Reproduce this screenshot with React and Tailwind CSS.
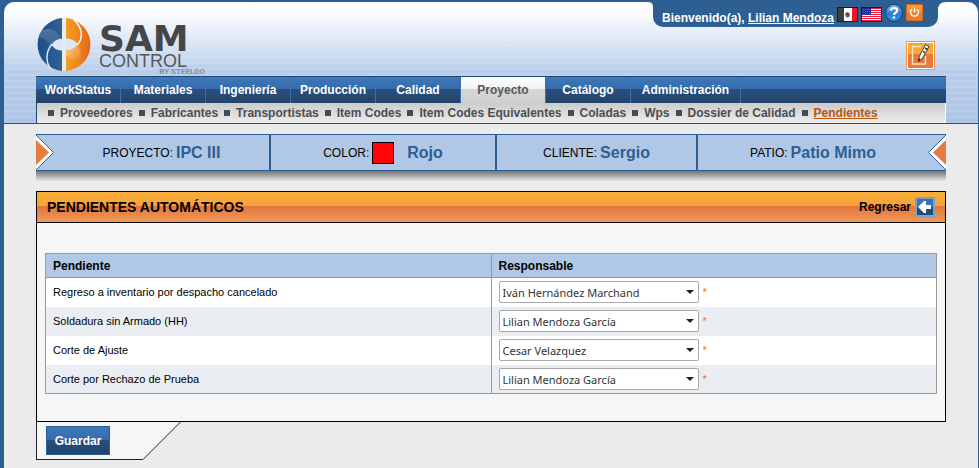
import React from "react";

const navItems = ["WorkStatus", "Materiales", "Ingeniería", "Producción", "Calidad", "Proyecto", "Catálogo", "Administración"];

const subItems = [
  "Proveedores",
  "Fabricantes",
  "Transportistas",
  "Item Codes",
  "Item Codes Equivalentes",
  "Coladas",
  "Wps",
  "Dossier de Calidad",
  "Pendientes",
];

const people = ["Iván Hernández Marchand", "Lilian Mendoza García", "Cesar Velazquez"];

const rows = [
  { id: "regreso", task: "Regreso a inventario por despacho cancelado", person: people[0] },
  { id: "soldadura", task: "Soldadura sin Armado (HH)", person: people[1] },
  { id: "ajuste", task: "Corte de Ajuste", person: people[2] },
  { id: "rechazo", task: "Corte por Rechazo de Prueba", person: people[1] },
];

function LogoMark() {
  return (
    <svg viewBox="0 0 54 54" className="h-[54px] w-[54px] shrink-0" aria-hidden="true">
      <defs>
        <linearGradient id="lgBlue" x1="0" y1="0" x2="1" y2="0">
          <stop offset="0" stopColor="#1f4f86" />
          <stop offset="1" stopColor="#2f6299" />
        </linearGradient>
        <linearGradient id="lgOrange" x1="0" y1="0" x2="1" y2="0">
          <stop offset="0" stopColor="#f6a01c" />
          <stop offset="0.4" stopColor="#f08a1e" />
          <stop offset="1" stopColor="#e2641b" />
        </linearGradient>
        <linearGradient id="lgSheen" x1="0" y1="0" x2="1" y2="1">
          <stop offset="0" stopColor="#ffffff" stopOpacity="0.2" />
          <stop offset="1" stopColor="#ffffff" stopOpacity="0.05" />
        </linearGradient>
        <linearGradient id="lgGlow" x1="0" y1="0" x2="1" y2="1">
          <stop offset="0" stopColor="#ffffff" stopOpacity="0.45" />
          <stop offset="1" stopColor="#ffffff" stopOpacity="0.05" />
        </linearGradient>
      </defs>
      <path d="M25 0.080A26.500 26.500 0 0 0 25 52.920Z" fill="url(#lgBlue)" />
      <path d="M29 0.080A26.500 26.500 0 0 1 29 52.920Z" fill="url(#lgOrange)" />
      <path d="M5 12Q18 8 23 20Q17 23 15 28Q9 21 2 19Q3 15 5 12Z" fill="url(#lgSheen)" />
      <path d="M29 32.500Q37 31 40 26Q44 30 44 40Q34 44 29 37Z" fill="url(#lgGlow)" />
      <path d="M14.500 27Q18 20 27 20.500Q37 20 40.500 26Q37 32.500 27 32.500Q18 33 14.500 27Z" fill="#dde7f4" />
      <path d="M25 0h4v53h-4z" fill="#e6edf7" />
      <path d="M15 26C9 33 8 44 14 51" fill="none" stroke="#e6edf7" strokeWidth="1.400" />
      <path d="M40 27C47 20 45 9 37 2" fill="none" stroke="#ffffff" strokeWidth="1.400" />
    </svg>
  );
}

function MexicoFlag() {
  return (
    <svg viewBox="0 0 21 15" className="h-[15px] w-[21px]" aria-hidden="true">
      <rect width="21" height="15" fill="#1c1c1c" />
      <rect x="1" y="1" width="6" height="13" fill="#3b3f3e" />
      <rect x="7" y="1" width="8" height="13" fill="#fff" />
      <rect x="15" y="1" width="5" height="13" fill="#f5102a" />
      <path d="M8.500 6l2-1 2 1 .500 3-1.500 1.500H9.500L8 8z" fill="#6b6f5c" />
      <path d="M9 6.500l3 1.500" stroke="#2b2b20" />
    </svg>
  );
}

function UsFlag() {
  return (
    <svg viewBox="0 0 21 15" className="h-[15px] w-[21px]" aria-hidden="true">
      <rect width="21" height="15" fill="#1c1c1c" />
      <rect x="1" y="1" width="19" height="13" fill="#fff" />
      <path d="M1 1.500h19M1 3.500h19M1 5.500h19M1 7.500h19M1 9.500h19M1 11.500h19M1 13.500h19" stroke="#ee1c38" />
      <rect x="1" y="1" width="9" height="7" fill="#1c2f8c" />
      <path d="M2 2.500h7M2 4.500h7M2 6.500h7" stroke="#5b69ad" strokeDasharray="1 1" />
    </svg>
  );
}

function HelpIcon() {
  return (
    <svg viewBox="0 0 18 18" className="h-[18px] w-[18px]" aria-hidden="true">
      <defs>
        <linearGradient id="help" x1="0" y1="0" x2="0" y2="1">
          <stop offset="0" stopColor="#8fbcec" />
          <stop offset="0.5" stopColor="#2f7bd0" />
          <stop offset="1" stopColor="#2f8fe6" />
        </linearGradient>
      </defs>
      <circle cx="9" cy="9" r="8.500" fill="url(#help)" stroke="#14406f" />
      <path d="M5.500 6.500Q6.500 4 9.200 4Q12.200 4.200 12.200 6.600Q12.200 8 10.200 9Q9 9.700 9 11" fill="none" stroke="#fff" strokeWidth="2.200" />
      <circle cx="8.900" cy="13.500" r="1.300" fill="#fff" />
    </svg>
  );
}

function PowerIcon() {
  return (
    <svg viewBox="0 0 17 17" className="h-[17px] w-[17px]" aria-hidden="true">
      <rect width="17" height="17" rx="1" fill="#d2691f" />
      <rect x="1" y="1" width="15" height="15" fill="#f39a3a" />
      <rect x="1" y="8" width="15" height="8" fill="#e87f30" />
      <path d="M5.800 5.200a4 4 0 1 0 5.400 0M8.500 3.500v5" fill="none" stroke="#fff" strokeWidth="1.300" />
    </svg>
  );
}

function EditIcon() {
  return (
    <svg viewBox="0 0 29 29" className="h-[29px] w-[29px]" aria-hidden="true">
      <rect width="29" height="29" fill="#f0953c" />
      <rect x="1" y="1" width="27" height="27" fill="#fff" />
      <rect x="2" y="2" width="25" height="11" fill="#f8a835" />
      <rect x="2" y="13" width="25" height="14" fill="#e5793f" />
      <path d="M15 5.500H6.500v17.500h13V15" fill="none" stroke="#fde3b8" strokeWidth="1.400" />
      <path d="M19.500 3.500l3.500 2-7 12.500-3.500 2.500 .500-4.500z" fill="#fff" stroke="#2f2f2f" strokeWidth="0.900" />
      <path d="M19 7l2.500 1.500M17.500 10l1 2M12.500 20l1.500-2.500" stroke="#2f2f2f" strokeWidth="1.500" />
    </svg>
  );
}

function BackIcon() {
  return (
    <svg viewBox="0 0 20 20" className="h-5 w-5" aria-hidden="true">
      <rect width="20" height="20" fill="#7da0c8" />
      <rect x="2" y="2" width="16" height="8" fill="#3a72b2" />
      <rect x="2" y="10" width="16" height="8" fill="#264a76" />
      <path d="M3 10l6-6h2v4h5v4h-5v4H9z" fill="#fff" />
    </svg>
  );
}

function InfoArrow({ flip }) {
  return (
    <svg viewBox="0 0 18 35" className={flip ? "h-[35px] w-[18px] shrink-0 rotate-180" : "h-[35px] w-[18px] shrink-0"} aria-hidden="true">
      <path d="M-1 -1L17.500 17.500L-1 36Z" fill="#fff" stroke="#2d5f93" />
      <path d="M0 5L13 17.500L0 30Z" fill="#e57b42" />
    </svg>
  );
}

function InfoCell({ label, value, children }) {
  return (
    <div className="flex flex-1 items-center justify-center gap-[3px]">
      <span>{label}:</span>
      {children}
      <strong className="text-[16px] text-[#2d5f93]">{value}</strong>
    </div>
  );
}

export default function App() {
  return (
    <div className="flex min-h-screen flex-col border-t-2 border-r border-l-4 border-[#2d5f93] bg-[#2d5f93] font-['Liberation_Sans',Arial,sans-serif] text-[12px] text-black">
      <header className="rounded-t-[10px] border-b border-[#234e80] bg-[repeating-linear-gradient(to_bottom,rgba(255,255,255,0.1)_0px,rgba(255,255,255,0.1)_2px,transparent_2px,transparent_6px),linear-gradient(to_bottom,#ffffff_0px,#f8fafd_15px,#b8cdea_70px,#adc5e7_121px)]">
        <div className="flex h-[74px] items-start justify-between pl-8">
          <a href="#inicio" aria-label="SAM Control" className="flex gap-2 pt-4 pl-[1px]">
            <LogoMark />
            <span className="flex w-[106px] flex-col text-[#444648]">
              <span className="pt-[6px] font-['DejaVu_Sans',sans-serif] text-[36px] leading-[30px] font-bold">SAM</span>
              <span className="text-[18px] leading-[14px] text-[#55585a]">CONTROL</span>
              <span className="text-right font-['Roboto',sans-serif] text-[8px] leading-[8px] font-bold text-[#8b8f94]">BY STEELGO</span>
            </span>
          </a>
          <div className="mr-10 flex flex-col items-end">
            <div className="relative flex h-[25px] items-start gap-[3px] rounded-b-[10px] bg-[#2d5f93] pr-[15px] pl-[9px] font-bold text-white">
              <svg viewBox="0 0 5 5" className="absolute top-0 -left-[5px] h-[5px] w-[5px]" aria-hidden="true">
                <path d="M0 0H5V5Q5 0 0 0Z" fill="#2d5f93" />
              </svg>
              <svg viewBox="0 0 8 8" className="absolute top-0 -right-2 h-2 w-2" aria-hidden="true">
                <path d="M8 0H0V8Q0 0 8 0Z" fill="#2d5f93" />
              </svg>
              <span className="pt-2 leading-[16px]">
                Bienvenido(a), <a href="#perfil" className="font-bold underline">Lilian Mendoza</a>
              </span>
              <button type="button" aria-label="Español" className="pt-[5px]"><MexicoFlag /></button>
              <button type="button" aria-label="English" className="pt-[5px]"><UsFlag /></button>
              <button type="button" aria-label="Ayuda" className="pt-[2px]"><HelpIcon /></button>
              <button type="button" aria-label="Salir" className="pt-[2px]"><PowerIcon /></button>
            </div>
            <button type="button" aria-label="Editar" className="mt-[14px] mr-[3px]"><EditIcon /></button>
          </div>
        </div>
        <div className="mx-8">
          <nav className="flex h-[27px] border-t border-[#1f4674] bg-[linear-gradient(to_bottom,#3d79bb_0px,#366bab_12px,#2a4f80_12px,#234468_26px)] font-bold text-white">
            {navItems.map((item) => {
              const active = item === "Proyecto";
              const wide = item === "Administración";
              return (
                <a
                  key={item}
                  href={"#" + item.toLowerCase()}
                  className={
                    "flex items-center justify-center border-r border-[#3a70b0] " +
                    (wide ? "w-[110px] " : "w-[85px] ") +
                    (active ? "bg-[linear-gradient(to_bottom,#ffffff_0px,#f2f2f2_12px,#d6d6d6_12px,#cfcfcf_26px)] text-[#55585a]" : "")
                  }
                >
                  {item}
                </a>
              );
            })}
          </nav>
          <nav className="flex h-5 items-center gap-[6px] border-r border-l border-r-white border-l-[#1f4674] bg-gradient-to-b from-[#cbcbcb] to-[#ededed] pl-[11px] font-bold text-[#4a4f52]">
            {subItems.map((item) => (
              <span key={item} className="flex items-center gap-[6px] whitespace-nowrap">
                <span className="h-[6px] w-[6px] bg-[#454c4e]" />
                <a href={"#" + item.toLowerCase().replaceAll(" ", "-")} className={item === "Pendientes" ? "text-[#b9570c] underline" : ""}>
                  {item}
                </a>
              </span>
            ))}
          </nav>
        </div>
      </header>

      <main className="flex-1 bg-[#ebebeb] px-8">
        <section className="mt-[10px]">
          <div className="grid h-[37px] grid-cols-[235fr_226fr_201fr_248fr] border-y border-[#2d5f93] bg-[#b1c7e6]">
            <div className="flex border-r-2 border-[#2d5f93]">
              <InfoArrow />
              <InfoCell label="PROYECTO" value="IPC III" />
            </div>
            <div className="flex border-r-2 border-[#2d5f93]">
              <InfoCell label="COLOR" value="Rojo">
                <span className="mr-[10px] h-[22px] w-[22px] border border-black bg-[#ff0505]" />
              </InfoCell>
            </div>
            <div className="flex border-r-2 border-[#2d5f93]">
              <InfoCell label="CLIENTE" value="Sergio" />
            </div>
            <div className="flex">
              <InfoCell label="PATIO" value="Patio Mimo" />
              <InfoArrow flip />
            </div>
          </div>
          <div className="h-[10px] bg-gradient-to-b from-[#747474] to-[#e6e6e6]" />
        </section>

        <section className="mt-[10px] border border-black bg-[#f6f6f6]">
          <div className="flex h-[31px] items-center justify-between border-b border-black bg-[linear-gradient(to_bottom,#f9ae3b_0px,#f6a338_14px,#e2743b_14px,#ef9a59_30px)] px-[10px]">
            <h1 className="text-[14px] font-bold">PENDIENTES AUTOMÁTICOS</h1>
            <a href="#regresar" className="flex items-center gap-1 font-bold">
              Regresar
              <BackIcon />
            </a>
          </div>
          <div className="px-2 pt-[30px] pb-[27px]">
            <table className="w-full table-fixed border-collapse border border-[#999]">
              <thead>
                <tr className="h-6 border-b border-[#999] bg-[#b1c7e6] text-left">
                  <th className="border-r border-[#999] px-[7px] py-0">Pendiente</th>
                  <th className="px-[7px] py-0">Responsable</th>
                </tr>
              </thead>
              <tbody>
                {rows.map((row) => (
                  <tr key={row.id} className="h-[29px] bg-white even:bg-[#eaeef3]">
                    <td className="border-r border-[#999] px-[7px] py-0 text-[11px]">
                      <label htmlFor={row.id}>{row.task}</label>
                    </td>
                    <td className="px-[7px] py-0">
                      <div className="flex h-[22px] items-center gap-1">
                        <div className="relative">
                          <select
                            id={row.id}
                            defaultValue={row.person}
                            className="block h-[22px] w-[200px] appearance-none rounded-[2px] border border-[#a9a9a9] bg-white pt-[2px] pl-[3px] font-['Noto_Sans','Open_Sans',sans-serif] text-[11px] text-[#333]"
                          >
                            {people.map((p) => (
                              <option key={p}>{p}</option>
                            ))}
                          </select>
                          <svg viewBox="0 0 8 4" className="pointer-events-none absolute top-[9px] right-[5px] h-1 w-2" aria-hidden="true">
                            <path d="M0 0H8L4 4Z" fill="#222" />
                          </svg>
                        </div>
                        <span className="text-[11px] text-[#e57b22]">*</span>
                      </div>
                    </td>
                  </tr>
                ))}
              </tbody>
            </table>
          </div>
        </section>
        <div className="flex h-[38px]">
          <div className="w-[107px] border-b border-l border-[#222] bg-[#f6f6f6] pt-1 pl-[9px]">
            <button
              type="button"
              className="h-[29px] w-16 border border-[#2d5f93] bg-[linear-gradient(to_bottom,#3d79bb_0px,#366bab_13px,#2a4f80_13px,#234468_27px)] text-[12px] font-bold text-white"
            >
              Guardar
            </button>
          </div>
          <svg viewBox="0 0 38 38" className="h-[38px] w-[38px]" aria-hidden="true">
            <path d="M0 0H38L0 38Z" fill="#f6f6f6" />
            <path d="M37.500 0L0 37.500" stroke="#222" />
          </svg>
        </div>
      </main>
    </div>
  );
}
